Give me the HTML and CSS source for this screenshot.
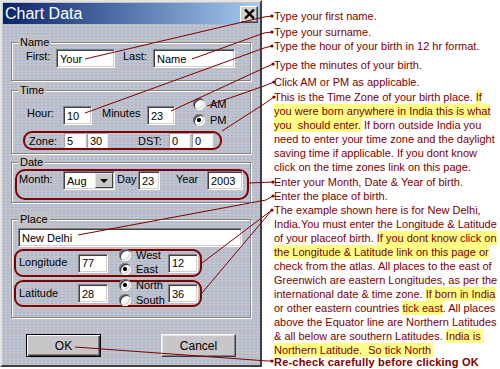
FILE: index.html
```html
<!DOCTYPE html>
<html lang="en">
<head>
    <meta charset="UTF-8">
    <title>Chart Data</title>
    <link rel="stylesheet" href="styles.css">
</head>
<body>
<div class="page">
    <div class="dialog">
        <div class="titlebar">
            <span class="title">Chart Data</span>
            <span class="close">
                <svg width="11" height="10" viewBox="0 0 11 10"><path d="M1 0.5 L10 9.5 M10 0.5 L1 9.5" stroke="#000" stroke-width="2.4"/></svg>
            </span>
        </div>
        <div class="body">
            <fieldset class="group name-group">
                <legend>Name</legend>
                <div class="row">
                    <span class="lbl lbl-first">First:</span>
                    <span class="field w-first">Your</span>
                    <span class="lbl lbl-last">Last:</span>
                    <span class="field w-last">Name</span>
                </div>
            </fieldset>

            <fieldset class="group time-group">
                <legend>Time</legend>
                <div class="row time-row">
                    <span class="lbl lbl-hour">Hour:</span>
                    <span class="field w-hour">10</span>
                    <span class="lbl lbl-min">Minutes</span>
                    <span class="field w-min">23</span>
                    <div class="radios ampm">
                        <div class="opt"><span class="radio"></span>AM</div>
                        <div class="opt"><span class="radio on"></span>PM</div>
                    </div>
                </div>
                <div class="mark-box zone-box">
                    <span class="lbl lbl-zone">Zone:</span>
                    <span class="field thin w-z1">5</span>
                    <span class="field thin w-z2">30</span>
                    <span class="lbl lbl-dst">DST:</span>
                    <span class="field thin w-d1">0</span>
                    <span class="field thin w-d2">0</span>
                </div>
            </fieldset>

            <fieldset class="group date-group">
                <legend>Date</legend>
                <div class="mark-box date-box">
                    <span class="lbl lbl-month">Month:</span>
                    <span class="field select">Aug<span class="drop"></span></span>
                    <span class="lbl lbl-day">Day</span>
                    <span class="field w-day">23</span>
                    <span class="lbl lbl-year">Year</span>
                    <span class="field w-year">2003</span>
                </div>
            </fieldset>

            <fieldset class="group place-group">
                <legend>Place</legend>
                <span class="field w-place">New Delhi</span>
                <div class="mark-box coord-box">
                    <span class="lbl lbl-coord">Longitude</span>
                    <span class="field w-deg">77</span>
                    <div class="radios">
                        <div class="opt"><span class="radio"></span>West</div>
                        <div class="opt"><span class="radio on"></span>East</div>
                    </div>
                    <span class="field w-deg">12</span>
                </div>
                <div class="mark-box coord-box lat-box">
                    <span class="lbl lbl-coord">Latitude</span>
                    <span class="field w-deg">28</span>
                    <div class="radios">
                        <div class="opt"><span class="radio on"></span>North</div>
                        <div class="opt"><span class="radio"></span>South</div>
                    </div>
                    <span class="field w-deg">36</span>
                </div>
            </fieldset>

            <div class="buttons">
                <span class="btn default">OK</span>
                <span class="btn">Cancel</span>
            </div>
        </div>
    </div>

    <div class="notes">
        <p class="n1">Type your first name.</p>
        <p class="n2">Type your surname.</p>
        <p class="n3">Type the hour of your birth in 12 hr format.</p>
        <p class="n4">Type the minutes of your birth.</p>
        <p class="n5">Click AM or PM as applicable.</p>
        <p class="n6">This is the Time Zone of your birth place. <mark>If</mark><br><mark>you were born anywhere in India this is what</mark><br><mark>you&nbsp; should enter.</mark> If born outside India you<br>need to enter your time zone and the daylight<br>saving time if applicable. If you dont know<br>click on the time zones link on this page.</p>
        <p class="n7">Enter your Month, Date &amp; Year of birth.</p>
        <p class="n8">Enter the place of birth.</p>
        <p class="n9">The example shown here is for New Delhi,<br>India.You must enter the Longitude &amp; Latitude<br>of your placeof birth. <mark>If you dont know click on</mark><br><mark>the Longitude &amp; Latitude link on this page or</mark><br>check from the atlas. All places to the east of<br>Greenwich are eastern Longitudes, as per the<br>international date &amp; time zone. <mark>If born in India</mark><br>or other eastern countries <mark>tick east</mark>. All places<br>above the Equator line are Northern Latitudes<br>&amp; all below are southern Latitudes. <mark>India is&nbsp;</mark><br><mark>Northern Latitude.&nbsp; So tick North&nbsp;</mark></p>
        <p class="n10">Re-check carefully before clicking OK</p>
    </div>

    <!-- pointer lines from each control to its note -->
    <svg class="wires" width="500" height="369" viewBox="0 0 500 369">
        <g fill="none" stroke="#800000" stroke-width="1">
            <polyline points="85,59 264,17 272,16"/>
            <polyline points="192,59 264,33 272,32"/>
            <polyline points="85,113 264,48 272,46"/>
            <polyline points="171,111 264,68 273,64"/>
            <polyline points="207,106 264,86 274,82"/>
            <polyline points="222,131 264,104 274,97"/>
            <polyline points="249,183 273,182"/>
            <polyline points="78,235 266,200 273,196"/>
            <polyline points="202,263 272,210"/>
            <polyline points="202,293 272,210"/>
            <polyline points="75,347 268,361 272,361"/>
        </g>
        <g fill="#800000">
            <circle cx="272" cy="16" r="1.6"/>
            <circle cx="272" cy="32" r="1.6"/>
            <circle cx="272" cy="46" r="1.6"/>
            <circle cx="273" cy="64" r="1.6"/>
            <circle cx="274" cy="82" r="1.6"/>
            <circle cx="274" cy="97" r="1.6"/>
            <circle cx="273" cy="182" r="1.6"/>
            <circle cx="273" cy="196" r="1.6"/>
            <circle cx="272" cy="210" r="1.6"/>
            <circle cx="272" cy="361" r="1.6"/>
        </g>
    </svg>
</div>
</body>
</html>
```

FILE: styles.css
```css
body {
    margin: 0;
    background: #fff;
    font-family: "Liberation Sans", Arial, sans-serif;
    font-size: 11px;
    color: #000;
}
.page {
    position: relative;
    width: 500px;
    height: 369px;
    display: flex;
    overflow: hidden;
}

/* dialog window */
.dialog {
    width: 262px;
    height: 367px;
    box-sizing: border-box;
    border: 2px solid;
    border-color: #e4e4e4 #404040 #404040 #e4e4e4;
    padding: 1px;
    background-color: #c3c2c6;
    background-image: radial-gradient(circle, #92b4ea 0.8px, transparent 1px);
    background-size: 4px 3px;
    display: flex;
    flex-direction: column;
    flex: none;
}
.titlebar {
    height: 21px;
    display: flex;
    align-items: center;
    justify-content: space-between;
    padding-left: 2px;
    background: linear-gradient(to right, #0a246a, #a6caf0);
}
.title {
    color: #fff;
    font-size: 16px;
    line-height: 21px;
}
.close {
    width: 18px;
    height: 17px;
    box-sizing: border-box;
    margin-right: 1px;
    margin-top: 1px;
    display: flex;
    align-items: center;
    justify-content: center;
    background: #d4d0c8;
    border: 1px solid;
    border-color: #fff #404040 #404040 #fff;
    box-shadow: inset -1px -1px 0 #808080;
}
.body {
    padding: 11px 8px 0 8px;
    display: flex;
    flex-direction: column;
}

/* group boxes */
.group {
    margin: 0;
    padding: 0;
    min-width: 0;
    border: 1px solid #808080;
    border-right-color: #8c8c8c;
    box-shadow: inset 1px 1px 0 #fff, 1px 1px 0 #fff;
}
.group legend {
    margin-left: 6px;
    padding: 0 2px;
    line-height: 14px;
    background: #c3c2c6;
}
.name-group { padding-bottom: 1px; }
.time-group { margin-top: 2px; padding-bottom: 3px; }
.date-group { margin-top: 1px; padding-bottom: 2px; }
.place-group { margin-top: 9px; padding-bottom: 10px; }

.row {
    display: flex;
    align-items: flex-start;
}
.lbl {
    line-height: 14px;
    box-sizing: border-box;
    flex: none;
    white-space: nowrap;
}
.name-group .row { padding: 0 0 11px 14px; }
.lbl-first { width: 30px; }
.lbl-last { width: 38px; padding-left: 8px; }

.time-row { padding-left: 15px; height: 31px; }
.time-row .lbl,
.time-row .field { margin-top: 9px; }
.lbl-hour { width: 36px; }
.lbl-min { width: 55px; padding-left: 10px; }

/* text boxes */
.field {
    display: flex;
    align-items: center;
    box-sizing: border-box;
    height: 19px;
    padding-left: 3px;
    background: #fff;
    border: 1px solid;
    border-color: #808080 #fff #fff #808080;
    box-shadow: inset 1px 1px 0 #404040, inset -1px -1px 0 #d4d0c8;
    white-space: nowrap;
    flex: none;
}
.field.thin {
    height: 15px;
    padding-left: 2px;
    box-shadow: none;
    border-color: #a0a0a0 #f0f0f0 #f0f0f0 #a0a0a0;
}
.w-first { width: 59px; }
.w-last { width: 82px; }
.w-hour { width: 29px; }
.w-min { width: 28px; }
.w-z1 { width: 22px; }
.w-z2 { width: 21px; margin-left: 1px; }
.w-d1 { width: 21px; }
.w-d2 { width: 21px; margin-left: 2px; }
.w-day { width: 22px; }
.w-year { width: 36px; }
.w-place { width: 224px; margin: 2px 0 0 6px; }
.w-deg { width: 30px; }

/* radio buttons */
.radios {
    display: flex;
    flex-direction: column;
    flex: none;
}
.ampm { margin-left: 18px; margin-top: -1px; }
.opt {
    display: flex;
    align-items: center;
    gap: 5px;
    height: 16px;
}
.radio {
    width: 12px;
    height: 12px;
    border-radius: 50%;
    background: #fff;
    box-shadow: inset 1px 1px 0 #808080, inset 2px 2px 0 #404040, inset -1px -1px 0 #fff, inset -2px -2px 0 #d4d0c8;
    flex: none;
}
.radio.on {
    background: radial-gradient(circle, #000 1.8px, #fff 2.3px);
}

/* dark red outlines around related controls */
.mark-box {
    display: flex;
    box-sizing: border-box;
    border: 2px solid #800000;
    border-radius: 9px;
}
.zone-box {
    width: 199px;
    height: 19px;
    margin: 3px 0 0 11px;
    align-items: center;
}
.lbl-zone { width: 39px; padding-left: 4px; }
.lbl-dst { width: 31px; margin-left: 30px; }

.date-box {
    width: 234px;
    height: 31px;
    margin-left: 3px;
    align-items: flex-start;
    border-radius: 10px;
}
.lbl-month { width: 46px; padding-left: 2px; margin-top: 1px; }
.lbl-day { width: 23px; padding-left: 2px; margin-top: 1px; }
.lbl-year { width: 47px; padding-left: 16px; margin-top: 1px; }
.select {
    width: 52px;
    justify-content: space-between;
    padding-right: 1px;
}
.drop {
    width: 18px;
    height: 15px;
    box-sizing: border-box;
    background: #c8c6c8;
    border: 1px solid;
    border-color: #e8e8e8 #404040 #404040 #e8e8e8;
    display: flex;
    align-items: center;
    justify-content: center;
}
.drop::after {
    content: "";
    border-left: 4px solid transparent;
    border-right: 4px solid transparent;
    border-top: 4px solid #000;
}

.coord-box {
    width: 188px;
    height: 28px;
    margin: 2px 0 0 2px;
    align-items: center;
}
.lat-box { margin-top: 3px; height: 27px; }
.lbl-coord { width: 62px; padding-left: 3px; margin-top: -2px; }
.coord-box .radios { width: 49px; margin-left: 11px; margin-top: -3px; }
.coord-box .opt { height: 14px; gap: 5px; }
.lat-box .opt { height: 15px; }

/* push buttons */
.buttons {
    display: flex;
    gap: 60px;
    margin: 16px 0 0 15px;
}
.btn {
    width: 75px;
    height: 23px;
    box-sizing: border-box;
    display: flex;
    align-items: center;
    justify-content: center;
    background: #c8c6c8;
    border: 1px solid;
    border-color: #fff #404040 #404040 #fff;
    box-shadow: inset -1px -1px 0 #808080, inset 1px 1px 0 #e4e4e4;
    font-size: 12px;
}
.btn.default {
    border-color: #000;
    box-shadow: inset 1px 1px 0 #fff, inset -1px -1px 0 #404040, inset -2px -2px 0 #808080;
}

/* notes column */
.notes {
    padding-left: 12px;
    color: #800000;
    white-space: nowrap;
    line-height: 14px;
}
.notes p { margin: 0; }
.notes mark {
    color: inherit;
    background: #ffff88;
    padding: 1px 0;
}
.n1 { margin-top: 9px !important; }
.n2 { margin-top: 2px !important; }
.n4 { margin-top: 5px !important; }
.n5 { margin-top: 3px !important; }
.n6 { margin-top: 1px !important; }
.n7 { margin-top: 1px !important; }
.n10 { margin-top: -2px !important; font-weight: bold; letter-spacing: 0.2px; }

.wires {
    position: absolute;
    left: 0;
    top: 0;
    pointer-events: none;
}
```
